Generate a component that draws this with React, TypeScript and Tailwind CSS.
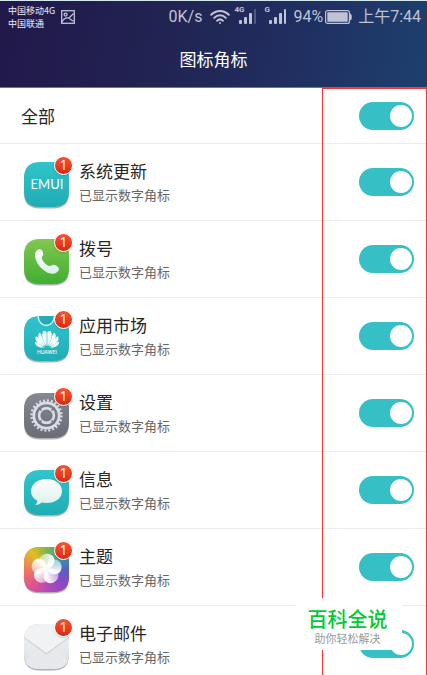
import React from 'react';

const squircle = 'M16 0H29C40 0 45 6 45 16V29C45 40 40 45 29 45H16C5 45 0 40 0 29V16C0 6 5 0 16 0Z';

function Tile({ id, from, to, children }: { id: string; from: string; to: string; children?: React.ReactNode }) {
  return (
    <svg width="45" height="47" viewBox="0 0 45 47" aria-hidden="true">
      <defs>
        <linearGradient id={id} x1="0" y1="0" x2="0" y2="1">
          <stop offset="0" stopColor={from} />
          <stop offset="1" stopColor={to} />
        </linearGradient>
        <linearGradient id={id + '-glyph'} x1="0" y1="0" x2="0" y2="1">
          <stop offset="0" stopColor="#ffffff" />
          <stop offset="1" stopColor="#d9efec" />
        </linearGradient>
        <clipPath id={id + '-clip'}>
          <path d={squircle} />
        </clipPath>
      </defs>
      <path d={squircle} transform="translate(0 1.4)" fill="#8f9a9c" opacity="0.75" />
      <path d={squircle} fill={`url(#${id})`} />
      <g clipPath={`url(#${id}-clip)`}>{children}</g>
    </svg>
  );
}

function UpdateIcon() {
  return (
    <Tile id="update" from="#30c5cb" to="#20acb4">
      <text x="23" y="27" textAnchor="middle" fontFamily="Lato, sans-serif" fontSize="13" fill="#fff">EMUI</text>
    </Tile>
  );
}

function PhoneIcon() {
  return (
    <Tile id="phone" from="#83c750" to="#3fae31">
      <path
        d="M15.5 10.2C17.8 10.2 19.3 13 19.2 15.3C19.1 17 17.8 17.3 17.9 19C18.2 22.3 22.4 26.5 25.4 27C27.3 27.2 28 25.5 30 25.8C32.3 26.3 35.3 28.5 35 30.2C34.3 33.3 30.5 35.4 26.8 34.6C18.5 32.8 11.3 24 11 16.2C11 13 12.8 10.2 15.5 10.2Z"
        fill="url(#phone-glyph)"
      />
    </Tile>
  );
}

function LogoHalf() {
  return (
    <>
      <path d="M22.7 30C19 26 16.8 19 19.3 15.3C21 14.4 22.7 15.3 22.7 17Z" />
      <path d="M22 30.2C15.5 26.5 12.3 21 15.3 16.8C17 17.2 17.6 19.5 18.2 21.5C19 24.5 20.6 27.5 22 30.2Z" />
      <path d="M21.3 30.6C13.5 28.5 10 24.3 11.9 20.2C13.8 20.6 14.9 22.5 16 24.3C17.6 27 19.5 29 21.3 30.6Z" />
      <path d="M20.5 31.2C14.5 32.3 11 29.6 11 25.7C13 26 14.3 27.2 15.6 28.3C17.2 29.7 19 30.6 20.5 31.2Z" />
    </>
  );
}

function MarketIcon() {
  return (
    <Tile id="market" from="#31c4cc" to="#20adb5">
      <path d="M14 -1C14 13 30.5 13 30.5 -1" fill="#24abb4" stroke="#dff6f6" strokeWidth="1.5" />
      <g fill="#f2fbfb">
        <LogoHalf />
        <g transform="matrix(-1 0 0 1 46 0)">
          <LogoHalf />
        </g>
      </g>
      <text x="23" y="38" textAnchor="middle" fontFamily="Inter, sans-serif" fontWeight="500" fontSize="5" fill="#e6f8f8">HUAWEI</text>
    </Tile>
  );
}

function SettingsIcon() {
  return (
    <Tile id="settings" from="#858892" to="#686d76">
      <g fill="none" stroke="#dadde5">
        <circle cx="22.5" cy="22.5" r="15" strokeWidth="2.4" strokeDasharray="1.963 1.963" />
        <circle cx="22.5" cy="22.5" r="12.7" strokeWidth="2.8" />
        <circle cx="22.5" cy="22.5" r="7.4" strokeWidth="2.6" />
        <path d="M14.5 14.5L17.5 17.5M30.5 14.5L27.5 17.5M14.5 30.5L17.5 27.5M30.5 30.5L27.5 27.5" stroke="#747882" strokeWidth="1.6" />
      </g>
    </Tile>
  );
}

function MessageIcon() {
  return (
    <Tile id="message" from="#31c5cc" to="#20adb4">
      <path
        d="M22.5 9C31.5 9 38 14.3 38 21.2C38 28 31.5 33 22.5 33C20.8 33 19 32.8 17.6 32.5C15.8 34.2 13.8 35.2 11.2 35C12.5 33.8 13.2 32.3 13.3 30.8C9.3 28.6 7 25.2 7 21.2C7 14.3 13.5 9 22.5 9Z"
        fill="url(#message-glyph)"
      />
    </Tile>
  );
}

const petals = [0, 72, 144, 216, 288];

function ThemeIcon() {
  return (
    <Tile id="theme" from="#9ca94d" to="#bd4fa4">
      <foreignObject width="45" height="45">
        <div className="h-full w-full bg-[conic-gradient(from_0deg,#7bb64e,#399cb0_55deg,#5262c5_90deg,#9146c5_135deg,#b84bb4_180deg,#e3558b_225deg,#ee7960_270deg,#e3bd25_320deg,#7bb64e)]" />
      </foreignObject>
      <defs>
        <linearGradient id="petal" x1="1" y1="0.6" x2="0" y2="0.3">
          <stop offset="0.2" stopColor="#fff" stopOpacity="0.95" />
          <stop offset="1" stopColor="#fff" stopOpacity="0.45" />
        </linearGradient>
      </defs>
      {petals.map((angle) => (
        <path
          key={angle}
          d="M22.5 22C18 20.5 14.8 17 15.3 13C16 8.5 20 6.3 24 6.8C28.5 7.5 31 11 30.3 15C29.5 19 26 21.3 22.5 22Z"
          fill="url(#petal)"
          transform={`rotate(${angle} 22.5 22)`}
        />
      ))}
    </Tile>
  );
}

function MailIcon() {
  return (
    <Tile id="mail" from="#eff1f4" to="#dfe2e5">
      <path d="M0 40L17 25H28L45 40V45H0Z" fill="#e6e8eb" />
      <path d="M0 40L17 25M45 40L28 25" stroke="#eff0f2" strokeWidth="1" />
      <path d="M0 14L22.5 30.5L45 14V0H0Z" fill="#cdd2d6" />
      <path d="M0 13L22.5 29L45 13V0H0Z" fill="#f0f2f4" />
    </Tile>
  );
}

const apps = [
  { name: '系统更新', Icon: UpdateIcon },
  { name: '拨号', Icon: PhoneIcon },
  { name: '应用市场', Icon: MarketIcon },
  { name: '设置', Icon: SettingsIcon },
  { name: '信息', Icon: MessageIcon },
  { name: '主题', Icon: ThemeIcon },
  { name: '电子邮件', Icon: MailIcon },
];

function Switch({ id }: { id: string }) {
  return (
    <input
      id={id}
      type="checkbox"
      role="switch"
      defaultChecked
      className="flex h-7 w-[55px] shrink-0 appearance-none items-center rounded-full bg-gray-300 px-[2px] before:block before:size-[22px] before:rounded-full before:bg-white checked:justify-end checked:bg-[#36bfc5]"
    />
  );
}

function Signal({ label, faded }: { label: string; faded?: boolean }) {
  return (
    <span className="flex items-start">
      <span className="w-[5px] font-[Roboto,sans-serif] text-[8px] leading-[8px] font-bold">{label}</span>
      <svg width="17" height="18" viewBox="0 0 17 18" fill="currentColor" aria-hidden="true">
        <rect x="0" y="14" width="3" height="4" rx="1" />
        <rect x="5" y="11" width="3" height="7" rx="1" />
        <rect x="10" y="7" width="3" height="11" rx="1" />
        <rect x="15" y="3" width="2" height="15" rx="1" opacity={faded ? 0.3 : 1} />
      </svg>
    </span>
  );
}

function StatusBar() {
  return (
    <div className="flex h-[31px] items-center pr-[6px] pl-2 text-[#bfc3d3]">
      <div className="text-[9px] leading-[13px] text-[#eeeef5]">
        <p>中国移动4G</p>
        <p>中国联通</p>
      </div>
      <svg width="14" height="14" viewBox="0 0 14 14" fill="none" stroke="currentColor" strokeWidth="1.3" aria-hidden="true" className="ml-[6px]">
        <rect x="0.7" y="0.7" width="12.6" height="12.6" />
        <circle cx="4.6" cy="4.6" r="1.5" />
        <path d="M1 12C2.5 8.5 5 7.5 8 8L12.5 3.5M7.5 8C9.5 9 10.5 10.5 12.5 11" />
      </svg>
      <div className="ml-auto flex items-center font-[Roboto,'Noto_Sans_CJK_SC',sans-serif] text-[16px] leading-5">
        <span>0K/s</span>
        <svg width="20" height="16" viewBox="0 0 20 16" fill="none" stroke="currentColor" strokeWidth="2" strokeLinecap="round" aria-hidden="true" className="ml-2">
          <path d="M1.2 5.8C6.2 0.6 13.8 0.6 18.8 5.8M4.2 8.9C7.5 5.5 12.5 5.5 15.8 8.9M7.2 11.7C8.8 10.2 11.2 10.2 12.8 11.7" />
          <circle cx="10" cy="14" r="1" fill="currentColor" stroke="none" />
        </svg>
        <span className="mb-1 ml-1 flex gap-2">
          <Signal label="4G" faded />
          <Signal label="G" />
        </span>
        <span className="ml-[7px]">94%</span>
        <svg width="27" height="14" viewBox="0 0 27 14" aria-hidden="true" className="mr-[6px] ml-[2px]">
          <rect x="0.6" y="0.6" width="23.8" height="12.8" rx="2" fill="none" stroke="currentColor" strokeWidth="1.2" />
          <rect x="2.3" y="2.3" width="20.4" height="9.4" rx="0.5" fill="currentColor" />
          <path d="M25 3.5Q26.8 3.8 26.8 7T25 10.5Z" fill="currentColor" />
        </svg>
        <span>上午7:44</span>
      </div>
    </div>
  );
}

export default function App() {
  return (
    <div className="relative flex h-screen flex-col overflow-hidden bg-white font-['Noto_Sans_CJK_SC',sans-serif] text-[#262626]">
      <header className="shrink-0 border-t border-b border-t-[#d3e8ef] border-b-[#6f7298] bg-[linear-gradient(100deg,#22184a_0%,#212452_40%,#202f61_70%,#1d406e_100%)]">
        <StatusBar />
        <h1 className="flex h-[55px] items-center justify-center pb-[2px] text-[17px] leading-6 text-white">图标角标</h1>
      </header>
      <main>
        <div className="flex h-14 items-center border-b border-[#ebebeb] pr-[13px] pl-[21px]">
          <label htmlFor="all" className="flex-1 text-[17px] leading-6">全部</label>
          <Switch id="all" />
        </div>
        <ul>
          {apps.map(({ name, Icon }, index) => (
            <li key={name} className="flex h-[77px] items-center border-b border-[#ebebeb] pr-[13px] pl-6">
              <div className="relative mt-[6px]">
                <Icon />
                <span className="absolute -top-[6px] -right-1 flex size-[19px] items-center justify-center rounded-full border border-white bg-linear-to-b from-[#fa5230] to-[#da2812] font-['Noto_Sans',sans-serif] text-[14px] leading-4 text-white shadow-sm">1</span>
              </div>
              <label htmlFor={`app-${index}`} className="ml-[10px] flex-1 pt-[2px]">
                <span className="block text-[17px] leading-6">{name}</span>
                <span className="block text-[13px] leading-6 text-[#666]">已显示数字角标</span>
              </label>
              <Switch id={`app-${index}`} />
            </li>
          ))}
        </ul>
      </main>
      <div className="pointer-events-none absolute top-[88px] right-0 -bottom-1 w-[105px] border border-[#f43535]" />
      <aside className="absolute right-[25px] bottom-[25px] flex h-[52px] w-[107px] flex-col items-center justify-end bg-white pr-[2px] pb-[3px] font-['Liberation_Sans','Noto_Sans_CJK_SC',sans-serif]">
        <p className="text-[20px] leading-[22px] font-medium text-[#00cb35]">百科全说</p>
        <p className="text-[11px] leading-4 text-[#999]">助你轻松解决</p>
      </aside>
    </div>
  );
}
